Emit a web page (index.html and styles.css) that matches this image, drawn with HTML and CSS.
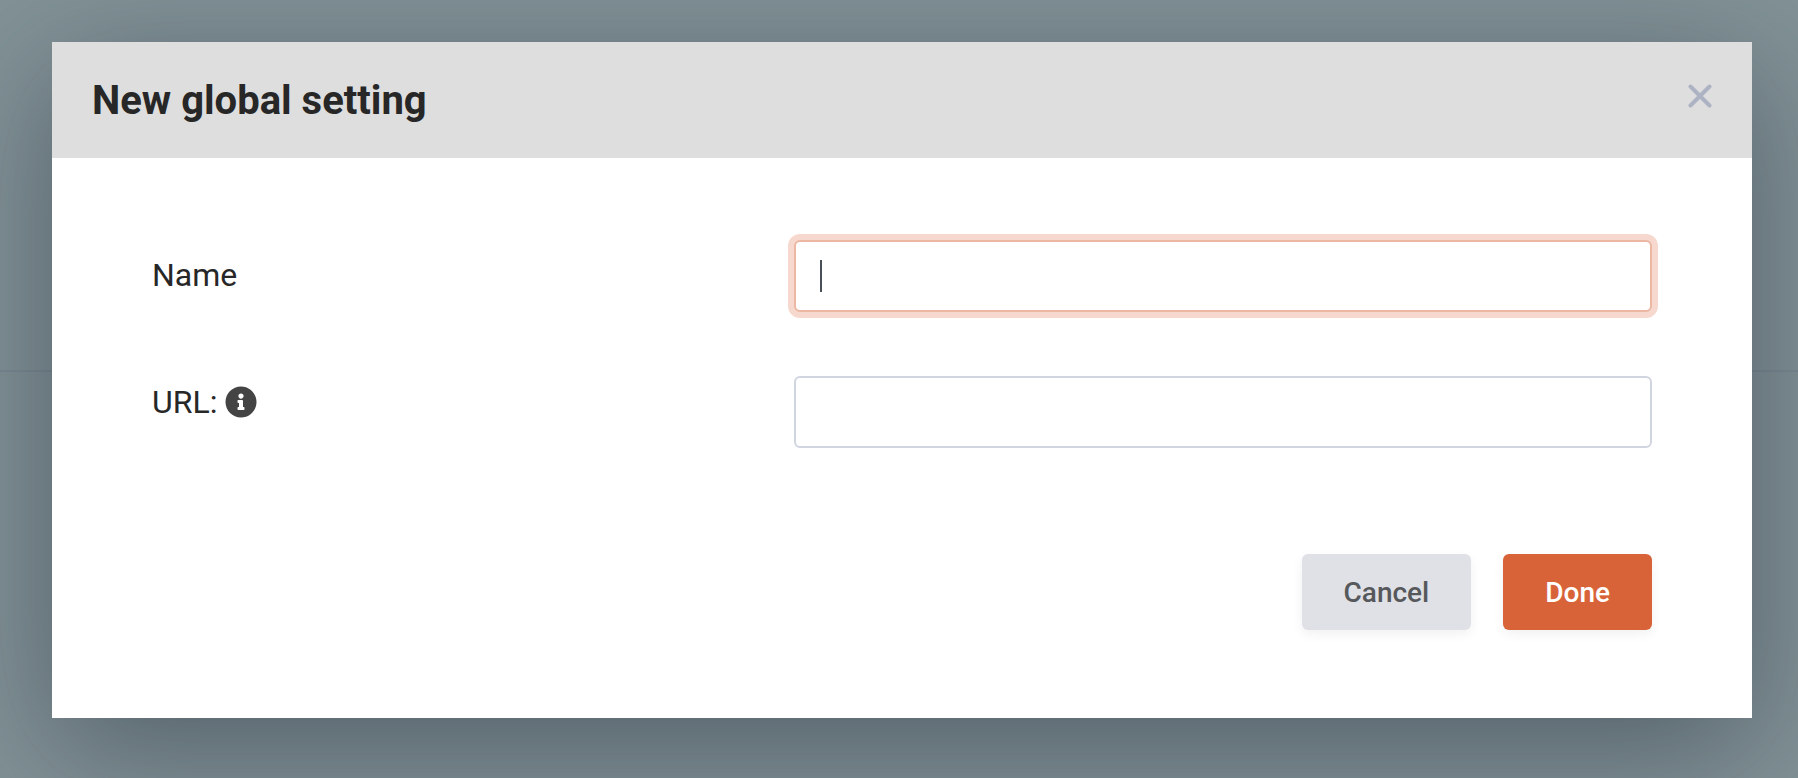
FILE: index.html
```html
<!DOCTYPE html>
<html lang="en">
<head>
<meta charset="utf-8">
<meta name="viewport" content="width=device-width, initial-scale=1">
<title>New global setting</title>
<link rel="stylesheet" href="styles.css">
</head>
<body>
<hr class="page-rule">
<div class="backdrop">
  <form class="modal" role="dialog" aria-labelledby="modal-title">
    <header class="modal-header">
      <h1 class="modal-title" id="modal-title">New global setting</h1>
      <button class="close" type="button" aria-label="Close">
        <svg viewBox="0 0 24 24" width="24" height="24" fill="none" stroke="currentColor" stroke-width="4" stroke-linecap="round"><path d="M2.500 2.500l19 19M21.500 2.500L2.500 21.500"/></svg>
      </button>
    </header>
    <div class="modal-body">
      <div class="field">
        <label class="label" for="name">Name</label>
        <div class="control">
          <input class="input input-active" id="name" type="text" autocomplete="off">
          <span class="caret" aria-hidden="true"></span>
        </div>
      </div>
      <div class="field field-top">
        <div class="label-group">
          <label class="label" for="url">URL:</label>
          <svg class="info" viewBox="0 0 512 512" width="32" height="32" role="img" aria-label="Information"><path fill="currentColor" d="M256 8C119.043 8 8 119.083 8 256c0 136.997 111.043 248 248 248s248-111.003 248-248C504 119.083 392.957 8 256 8zm0 110c23.196 0 42 18.804 42 42s-18.804 42-42 42-42-18.804-42-42 18.804-42 42-42zm56 254c0 6.627-5.373 12-12 12h-88c-6.627 0-12-5.373-12-12v-24c0-6.627 5.373-12 12-12h12v-64h-12c-6.627 0-12-5.373-12-12v-24c0-6.627 5.373-12 12-12h64c6.627 0 12 5.373 12 12v100h12c6.627 0 12 5.373 12 12v24z"/></svg>
        </div>
        <input class="input" id="url" type="text" autocomplete="off">
      </div>
      <div class="actions">
        <button class="button button-cancel" type="button">Cancel</button>
        <button class="button button-done" type="submit">Done</button>
      </div>
    </div>
  </form>
</div>
</body>
</html>
```
FILE: styles.css
```css
*, *::before, *::after {
  box-sizing: border-box;
}

body {
  margin: 0;
  overflow: hidden;
  background: #829296;
  color: #272727;
  font-family: Roboto, "Liberation Sans", sans-serif;
}

/* Divider of the dimmed page behind the dialog */
.page-rule {
  position: absolute;
  top: 370px;
  left: 0;
  right: 0;
  margin: 0;
  border: 0;
  border-top: 2px solid #7a8a92;
}

.backdrop {
  position: relative;
  min-height: 100vh;
  padding: 42px 46px 60px 52px;
}

.modal {
  background: #fff;
  box-shadow: 0 32px 120px rgba(25, 32, 50, 0.44);
}

.modal-header {
  display: flex;
  align-items: center;
  justify-content: space-between;
  padding: 35px 40px 33px;
  background: #dedede;
}

.modal-title {
  margin: 0;
  font-size: 40px;
  font-weight: 700;
  line-height: 48px;
}

.close {
  display: flex;
  align-self: flex-start;
  margin: 0;
  padding: 7px 0;
  border: 0;
  background: none;
  color: #adb3c2;
}

.modal-body {
  padding: 82px 100px 88px;
}

.field {
  display: grid;
  grid-template-columns: 1fr 57.2%;
  align-items: center;
  margin-bottom: 64px;
}

.field-top {
  align-items: start;
}

.label {
  padding-bottom: 2px;
  font-size: 32px;
  line-height: 40px;
}

.label-group {
  display: flex;
  align-items: center;
  gap: 8px;
  padding-top: 6px;
}

.label-group .label {
  padding-bottom: 0;
}

.info {
  color: #444;
}

.control {
  position: relative;
}

.input {
  display: block;
  width: 100%;
  height: 72px;
  padding: 0 24px;
  border: 2px solid #d1d5e0;
  border-radius: 6px;
  outline: 0;
  background: #fff;
  color: #495057;
  font: inherit;
  font-size: 32px;
}

.input-active {
  border-color: #ecb7a3;
  box-shadow: 0 0 0 6px #f6d8ce;
}

.caret {
  position: absolute;
  top: 20px;
  left: 26px;
  width: 2px;
  height: 32px;
  background: #495057;
}

.actions {
  display: flex;
  justify-content: flex-end;
  gap: 32px;
  padding-top: 42px;
}

.button {
  padding: 21px 42px 19px;
  border: 0;
  border-radius: 6px;
  box-shadow: 0 4px 12px rgba(0, 0, 0, 0.06);
  font-family: inherit;
  font-size: 28px;
  font-weight: 500;
  line-height: 36px;
}

.button-cancel {
  background: #dfe1e6;
  color: #56585c;
}

.button-done {
  background: #d86339;
  color: #fff;
}
```
